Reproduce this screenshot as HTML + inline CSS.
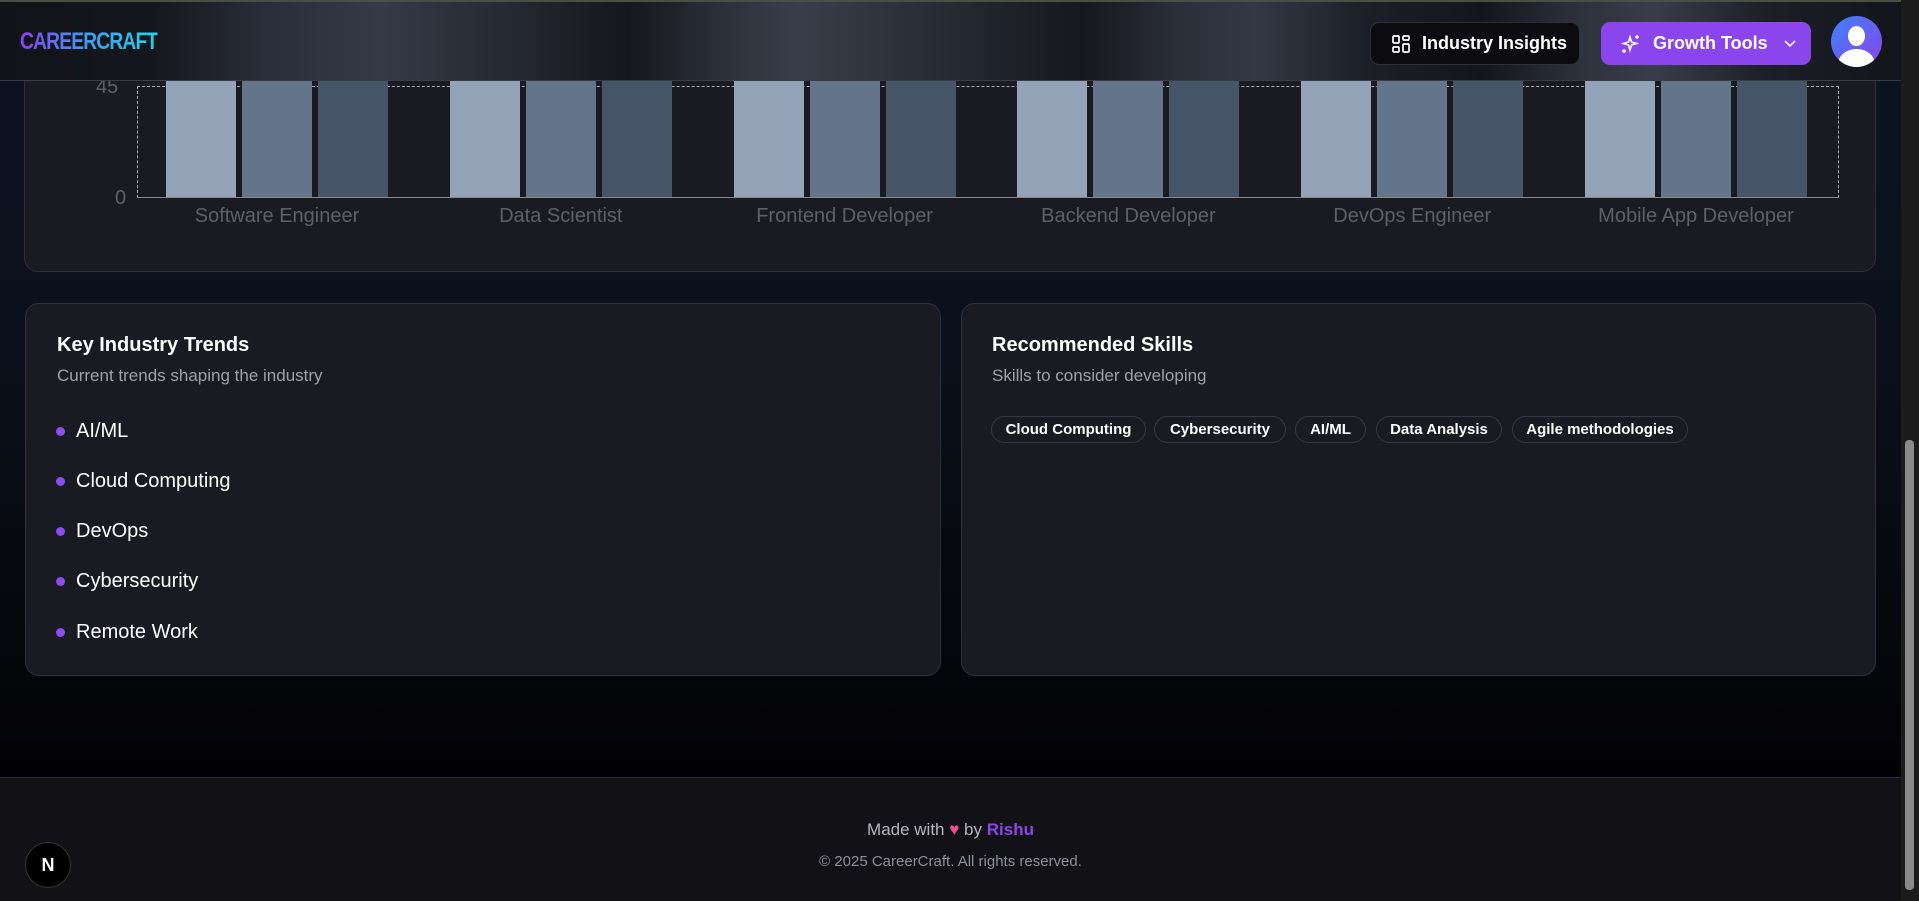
<!DOCTYPE html>
<html><head><meta charset="utf-8"><style>
*{box-sizing:border-box;margin:0;padding:0}
body{width:1919px;height:901px;overflow:hidden;font-family:"Liberation Sans",sans-serif;background:linear-gradient(180deg,#0d1322 0%,#0b101c 40%,#05060a 75%,#020205 86%);position:relative;color:#fff}
.hdr{position:absolute;left:0;top:0;width:1901px;height:81px;border-bottom:1px solid #3a3d48;border-top:2px solid #4a4f44;
background:linear-gradient(90deg,#111319 0%,#15171e 8%,#2a2e3a 14%,#353a47 20%,#23262f 28%,#15171d 33%,#2c303b 38%,#3a3e4a 42%,#262a33 50%,#16181e 57%,#2b2f3a 62%,#343845 66%,#1c1f27 72%,#14161c 78%,#2d313c 83%,#393d49 87%,#1c1f27 93%,#13151b 100%);z-index:5}
.logo{position:absolute;left:20px;top:26px;font-weight:bold;font-size:24px;letter-spacing:-1px;background:linear-gradient(90deg,#8a3ff5,#3aa0f0,#22d3ee);-webkit-background-clip:text;color:transparent;transform:scaleX(.8);transform-origin:left}
.btn{position:absolute;top:20px;height:43px;border-radius:9px;display:flex;align-items:center;font-weight:bold;font-size:18px}
.card{position:absolute;background:#1a1a22;border:1px solid #2e3039;border-radius:14px}
.sb{position:absolute;right:0;top:0;width:18px;height:901px;background:#1c1c1c}
.sb div{position:absolute;left:4px;top:440px;width:9px;height:450px;background:#8a8a8a;border-radius:4px}
.bar{position:absolute;width:70px}
.lbl{position:absolute;top:205px;font-size:20px;color:#5d6068;transform:translateX(-50%);white-space:nowrap}
.li{position:absolute;left:56px;font-size:20px;display:flex;align-items:center}
.li:before{content:"";width:9px;height:9px;border-radius:50%;background:#8b4cf0;margin-right:11px}
.bd{position:absolute;top:416px;height:27px;border:1px solid #363842;border-radius:14px;font-size:15px;font-weight:bold;display:flex;align-items:center;justify-content:center}
</style></head><body>
<div class="card" style="left:24px;top:-20px;width:1852px;height:292px"></div>
<div style="position:absolute;left:137px;top:86px;width:1702px;height:112px;border:1px dashed #aaa;border-bottom:1px solid #888"></div>
<div style="position:absolute;left:96px;top:76px;font-size:20px;color:#5d6068">45</div>
<div style="position:absolute;left:115px;top:187px;font-size:20px;color:#5d6068">0</div>
<div id="bars"></div>
<script>
var h='';var labels=["Software Engineer","Data Scientist","Frontend Developer","Backend Developer","DevOps Engineer","Mobile App Developer"];
var cols=["#94a3b8","#64748b","#475569"];
for(var g=0;g<6;g++){var x=166+g*283.8;for(var b=0;b<3;b++){h+='<div class="bar" style="left:'+(x+b*76)+'px;top:70px;height:127px;background:'+cols[b]+'"></div>';}
h+='<div class="lbl" style="left:'+(x+111)+'px">'+labels[g]+'</div>';}
document.getElementById('bars').innerHTML=h;
</script>
<div class="hdr">
<div class="logo">CAREERCRAFT</div>
<div class="btn" style="left:1370px;width:210px;background:#0c0c10;border:1px solid #2e3038"><svg style="margin:0 12px 0 21px" width="18" height="18" viewBox="0 0 18 18" fill="none" stroke="#fff" stroke-width="1.7"><rect x="1" y="1" width="6" height="7" rx="1"/><rect x="11" y="1" width="6" height="4" rx="1"/><rect x="11" y="9" width="6" height="8" rx="1"/><rect x="1" y="12" width="6" height="5" rx="1"/></svg>Industry Insights</div>
<div class="btn" style="left:1601px;width:210px;background:#8b45ec"><svg style="margin:0 12px 0 20px" width="20" height="20" viewBox="0 0 20 20" fill="none" stroke="#fff" stroke-width="1.6"><path d="M9 3 L10.5 8 L15.5 9.5 L10.5 11 L9 16 L7.5 11 L2.5 9.5 L7.5 8Z"/><path d="M16 1v4M14 3h4"/><circle cx="3" cy="17" r="1"/></svg>Growth Tools<svg style="margin-left:16px" width="12" height="8" viewBox="0 0 12 8" fill="none" stroke="#fff" stroke-width="1.6"><path d="M1 1l5 5 5-5"/></svg></div>
<div style="position:absolute;left:1831px;top:14px;width:51px;height:51px;border-radius:50%;background:linear-gradient(135deg,#3b82f6,#8b45ec);overflow:hidden"><div style="position:absolute;left:17px;top:10px;width:17px;height:20px;border-radius:50%;background:#fff"></div><div style="position:absolute;left:7px;top:33px;width:37px;height:30px;border-radius:50%;background:#fff"></div></div>
</div>
<div class="card" style="left:25px;top:303px;width:916px;height:373px">
<div style="position:absolute;left:31px;top:30px;font-size:20px;font-weight:bold">Key Industry Trends</div>
<div style="position:absolute;left:31px;top:62px;font-size:17px;color:#9ca0aa">Current trends shaping the industry</div>
</div>
<div class="li" style="top:420px">AI/ML</div>
<div class="li" style="top:470px">Cloud Computing</div>
<div class="li" style="top:520px">DevOps</div>
<div class="li" style="top:570px">Cybersecurity</div>
<div class="li" style="top:621px">Remote Work</div>
<div class="card" style="left:961px;top:303px;width:915px;height:373px">
<div style="position:absolute;left:30px;top:30px;font-size:20px;font-weight:bold">Recommended Skills</div>
<div style="position:absolute;left:30px;top:62px;font-size:17px;color:#9ca0aa">Skills to consider developing</div>
</div>
<div class="bd" style="left:991px;width:155px">Cloud Computing</div>
<div class="bd" style="left:1154px;width:132px">Cybersecurity</div>
<div class="bd" style="left:1295px;width:71px">AI/ML</div>
<div class="bd" style="left:1376px;width:126px">Data Analysis</div>
<div class="bd" style="left:1512px;width:176px">Agile methodologies</div>
<div style="position:absolute;left:0;top:777px;width:1901px;height:124px;background:#111116;border-top:1px solid #2a2a44"></div>
<div style="position:absolute;left:0;top:820px;width:1901px;text-align:center;font-size:17px;color:#b4b6bd">Made with <span style="color:#f0508c">&#9829;</span> by <b style="color:#8b45ec">Rishu</b></div>
<div style="position:absolute;left:0;top:853px;width:1901px;text-align:center;font-size:15px;color:#8d9098">© 2025 CareerCraft. All rights reserved.</div>
<div style="position:absolute;left:25px;top:842px;width:46px;height:46px;border-radius:50%;background:#000;border:1px solid #333;color:#fff;font-weight:bold;font-size:18px;display:flex;align-items:center;justify-content:center">N</div>
<div class="sb"><div></div></div>
</body></html>
